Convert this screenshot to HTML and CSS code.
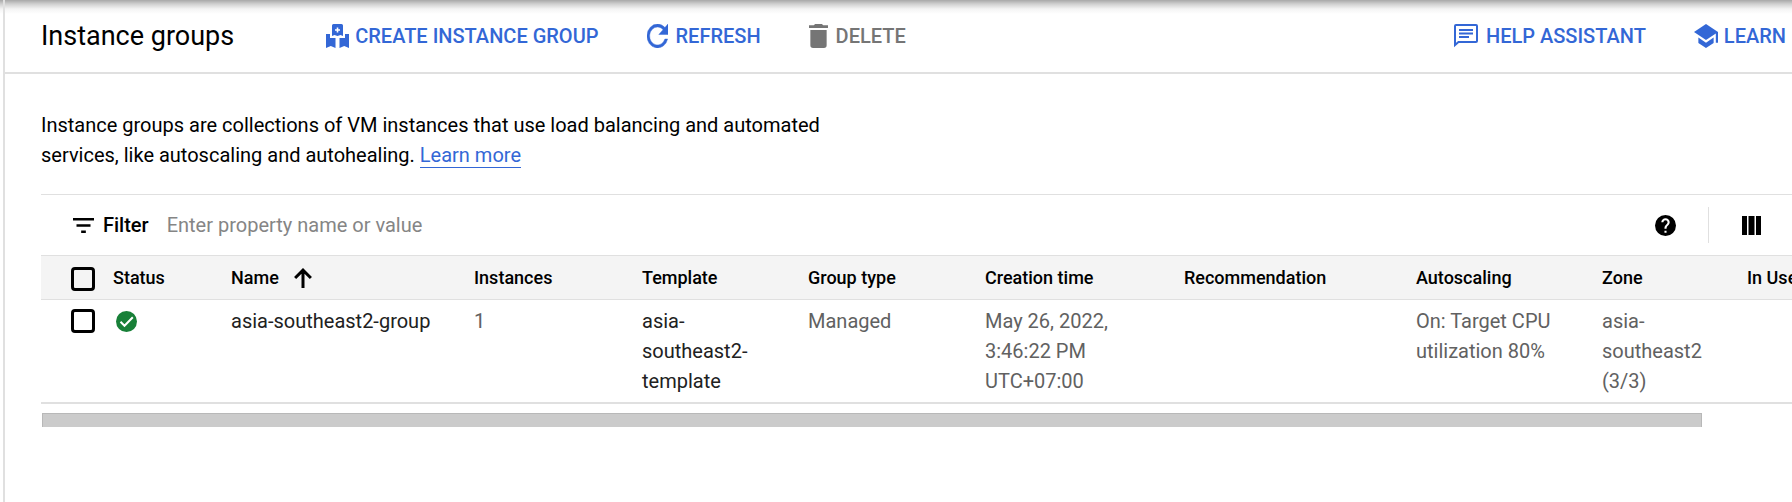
FILE: index.html
```html
<!DOCTYPE html>
<html lang="en">
<head>
<meta charset="utf-8">
<title>Instance groups</title>
<link rel="stylesheet" href="styles.css">
</head>
<body>
<div class="shell">
  <div class="rail"></div>
  <div class="page">
    <header class="topbar">
      <h1 class="title">Instance groups</h1>
      <div class="actions">
        <button class="action action-tight" type="button">
          <svg class="icon icon-group" viewBox="0 0 23 24" aria-hidden="true"><path fill="currentColor" fill-rule="evenodd" d="M7.500 0h8A1.500 1.500 0 0 1 17 1.500V12l-2.500-1-3 1-3-1L6 12V1.500A1.500 1.500 0 0 1 7.500 0zM10.700 3.500v1.700H9v1.600h1.700v1.700h1.600V6.800H14V5.200h-1.700V3.500zM0 10h4v4h5.500v10l-4.700-2L0 24zM19 10h4v14l-4.800-2-4.700 2V14H19z"/></svg>
          Create instance group
        </button>
        <button class="action" type="button">
          <svg class="icon icon-refresh" viewBox="4 4 16 16" preserveAspectRatio="none" aria-hidden="true"><path fill="currentColor" stroke="currentColor" stroke-width=".3" d="M17.650 6.350A7.960 7.960 0 0 0 12 4a8 8 0 1 0 7.730 10h-2.080A6 6 0 1 1 12 6c1.660 0 3.140.69 4.220 1.780L13 11h7V4z"/></svg>
          Refresh
        </button>
        <button class="action" type="button" disabled>
          <svg class="icon icon-delete" viewBox="5 3 14 18" preserveAspectRatio="none" aria-hidden="true"><path fill="currentColor" d="M6 19a2 2 0 0 0 2 2h8a2 2 0 0 0 2-2V7.500H6zM19 4h-3.500l-1-1h-5l-1 1H5v2h14z"/></svg>
          Delete
        </button>
      </div>
      <div class="actions actions-end">
        <button class="action" type="button">
          <svg class="icon icon-chat" viewBox="0 0 24 24" aria-hidden="true"><g fill="none" stroke="currentColor" stroke-width="2"><path d="M1 21V2a1 1 0 0 1 1-1h20a1 1 0 0 1 1 1v15a1 1 0 0 1-1 1H4.500z"/><path d="M5 6h14M5 9.500h14M5 13h10"/></g></svg>
          Help assistant
        </button>
        <button class="action action-tight" type="button">
          <svg class="icon icon-learn" viewBox="1 3 22 18" preserveAspectRatio="none" aria-hidden="true"><path fill="currentColor" d="M5 13.180v4L12 21l7-3.820v-4L12 17zM12 3 1 9l11 6 9-4.910V17h2V9z"/></svg>
          Learn
        </button>
      </div>
    </header>
    <main class="content">
      <p class="intro">Instance groups are collections of VM instances that use load balancing and automated services, like autoscaling and autohealing. <a class="link" href="#">Learn more</a></p>
      <div class="filter">
        <svg class="filter-icon" viewBox="3 6 18 12" preserveAspectRatio="none" aria-hidden="true"><path fill="currentColor" d="M10 18h4v-2h-4zM3 6v2h18V6zM6 13h12v-2H6z"/></svg>
        <label class="filter-label" for="filter">Filter</label>
        <input class="filter-input" id="filter" type="text" placeholder="Enter property name or value">
        <button class="tool" type="button" aria-label="Help">
          <svg class="tool-icon" viewBox="2 2 20 20" aria-hidden="true"><path fill="currentColor" d="M12 2a10 10 0 1 0 0 20 10 10 0 0 0 0-20zm1 17h-2v-2h2zm2.070-7.750-.9.920C13.450 12.900 13 13.500 13 15h-2v-.5c0-1.100.45-2.100 1.170-2.830l1.240-1.260c.37-.36.590-.86.590-1.410a2 2 0 0 0-4 0H8a4 4 0 0 1 8 0c0 .88-.36 1.680-.93 2.250z"/></svg>
        </button>
        <span class="divider"></span>
        <button class="tool" type="button" aria-label="Column display options">
          <svg class="tool-icon tool-columns" viewBox="0 0 19 19" aria-hidden="true"><path fill="currentColor" d="M0 0h5v19H0zM6.500 0h6v19h-6zM14 0h5v19h-5z"/></svg>
        </button>
      </div>
      <div class="table-wrap">
        <table class="table">
          <colgroup>
            <col class="c-check"><col class="c-status"><col class="c-name"><col class="c-instances"><col class="c-template"><col class="c-type"><col class="c-created"><col class="c-rec"><col class="c-auto"><col class="c-zone"><col class="c-use">
          </colgroup>
          <thead>
            <tr>
              <th class="check-cell"><input class="check" type="checkbox" aria-label="Select all"></th>
              <th>Status</th>
              <th><span class="sorted">Name <svg class="sort-icon" viewBox="4 3 16 18" aria-hidden="true"><path fill="none" stroke="currentColor" stroke-width="2.700" d="M12 21V5M4.900 12 12 4.900 19.100 12"/></svg></span></th>
              <th>Instances</th>
              <th>Template</th>
              <th>Group type</th>
              <th>Creation time</th>
              <th>Recommendation</th>
              <th>Autoscaling</th>
              <th>Zone</th>
              <th>In Use</th>
            </tr>
          </thead>
          <tbody>
            <tr>
              <td class="check-cell"><input class="check" type="checkbox" aria-label="Select asia-southeast2-group"></td>
              <td class="status-cell"><svg class="status" viewBox="0 0 21 21" role="img" aria-label="Healthy"><circle cx="10.500" cy="10.500" r="10.500" fill="#188038"/><path fill="none" stroke="#fff" stroke-width="2" d="m4.500 10.800 4 4 8.300-8.500"/></svg></td>
              <td><a class="name" href="#">asia-southeast2-group</a></td>
              <td>1</td>
              <td><a class="name" href="#">asia-southeast2-template</a></td>
              <td>Managed</td>
              <td>May 26, 2022, 3:46:22&nbsp;PM UTC+07:00</td>
              <td></td>
              <td>On: Target CPU utilization 80%</td>
              <td>asia-southeast2 (3/3)</td>
              <td></td>
            </tr>
          </tbody>
        </table>
      </div>
      <div class="scroll-track"><div class="scroll-thumb"></div></div>
    </main>
  </div>
</div>
</body>
</html>
```
FILE: styles.css
```css
* {
  box-sizing: border-box;
}

body {
  margin: 0;
  background: #fff;
  color: #000;
  font: 20px/30px Roboto, sans-serif;
  overflow: hidden;
}

button {
  padding: 0;
  border: 0;
  background: none;
  font: inherit;
  color: inherit;
}

.shell {
  display: flex;
  min-height: 100vh;
  background: linear-gradient(#a8a8a8, #d0d0d0 4px, #f4f4f4 9px, #fff 14px) top / 100% 14px no-repeat;
}

.rail {
  flex: none;
  width: 5px;
  border-right: 2px solid #e0e0e0;
}

.page {
  flex: 1;
  min-width: 0;
}

.topbar {
  display: flex;
  align-items: center;
  height: 74px;
  padding: 0 6px 0 36px;
  border-bottom: 2px solid #e0e0e0;
}

.title {
  margin: 0;
  font-size: 27px;
  line-height: 36px;
  font-weight: 400;
}

.actions {
  display: flex;
  gap: 48px;
  margin-left: 92px;
}

.actions-end {
  margin-left: auto;
}

.action {
  display: flex;
  align-items: center;
  gap: 8px;
  color: #3367d6;
  font-weight: 500;
  text-transform: uppercase;
  white-space: nowrap;
}

.action-tight {
  gap: 6px;
}

.action:disabled {
  color: #757575;
}

.icon {
  width: 24px;
  height: 24px;
}

.icon-group {
  width: 23px;
}

.icon-refresh {
  width: 21px;
}

.icon-delete {
  width: 19px;
}

.content {
  padding: 36px 0 0 36px;
}

.intro {
  max-width: 780px;
  margin: 0 0 24px;
}

.link {
  border-bottom: 1px solid #3367d6;
  color: #3367d6;
  text-decoration: none;
}

.filter {
  display: flex;
  align-items: center;
  height: 61px;
  padding: 0 31px 0 32px;
  border-top: 1px solid #e0e0e0;
}

.filter-icon {
  width: 21px;
  height: 15px;
  margin-right: 9px;
}

.filter-label {
  margin-right: 18px;
  font-weight: 500;
}

.filter-input {
  flex: 1;
  min-width: 0;
  padding: 0;
  border: 0;
  outline: 0;
  background: none;
  font: inherit;
}

.filter-input::placeholder {
  color: #858585;
}

.tool {
  display: flex;
}

.tool-icon {
  width: 21px;
  height: 21px;
}

.tool-columns {
  width: 19px;
  height: 19px;
}

.divider {
  height: 36px;
  margin: 0 33px 0 32px;
  border-left: 1px solid #e0e0e0;
}

.table-wrap {
  overflow: hidden;
}

.table {
  width: 1827px;
  table-layout: fixed;
  border-collapse: collapse;
  color: #616161;
}

.c-check { width: 72px; }
.c-status { width: 118px; }
.c-name { width: 243px; }
.c-instances { width: 168px; }
.c-template { width: 166px; }
.c-type { width: 177px; }
.c-created { width: 199px; }
.c-rec { width: 232px; }
.c-auto { width: 186px; }
.c-zone { width: 145px; }
.c-use { width: 121px; }

.table th {
  height: 44px;
  padding: 0;
  border-top: 1px solid #e0e0e0;
  border-bottom: 1px solid #e0e0e0;
  background: #f4f4f4;
  color: #000;
  font-size: 18px;
  font-weight: 500;
  text-align: left;
  white-space: nowrap;
}

.table td {
  padding: 6px 40px 6px 0;
  border-bottom: 2px solid #e0e0e0;
  vertical-align: top;
}

.table .check-cell {
  padding-left: 30px;
  padding-right: 0;
}

.check {
  appearance: none;
  display: block;
  width: 24px;
  height: 24px;
  margin: 3px 0 0;
  border: 3px solid #000;
  border-radius: 4px;
}

.sorted {
  display: flex;
  align-items: center;
  gap: 15px;
}

.sort-icon {
  width: 18px;
  height: 20px;
}

.status {
  display: block;
  width: 21px;
  height: 21px;
  margin: 5px 0 0 3px;
}

.name {
  color: #212121;
  text-decoration: none;
}

.scroll-track {
  padding: 9px 90px 0 1px;
}

.scroll-thumb {
  height: 14px;
  border: 1px solid #b8b8b8;
  border-bottom: 0;
  background: #cbcbcb;
}
```
